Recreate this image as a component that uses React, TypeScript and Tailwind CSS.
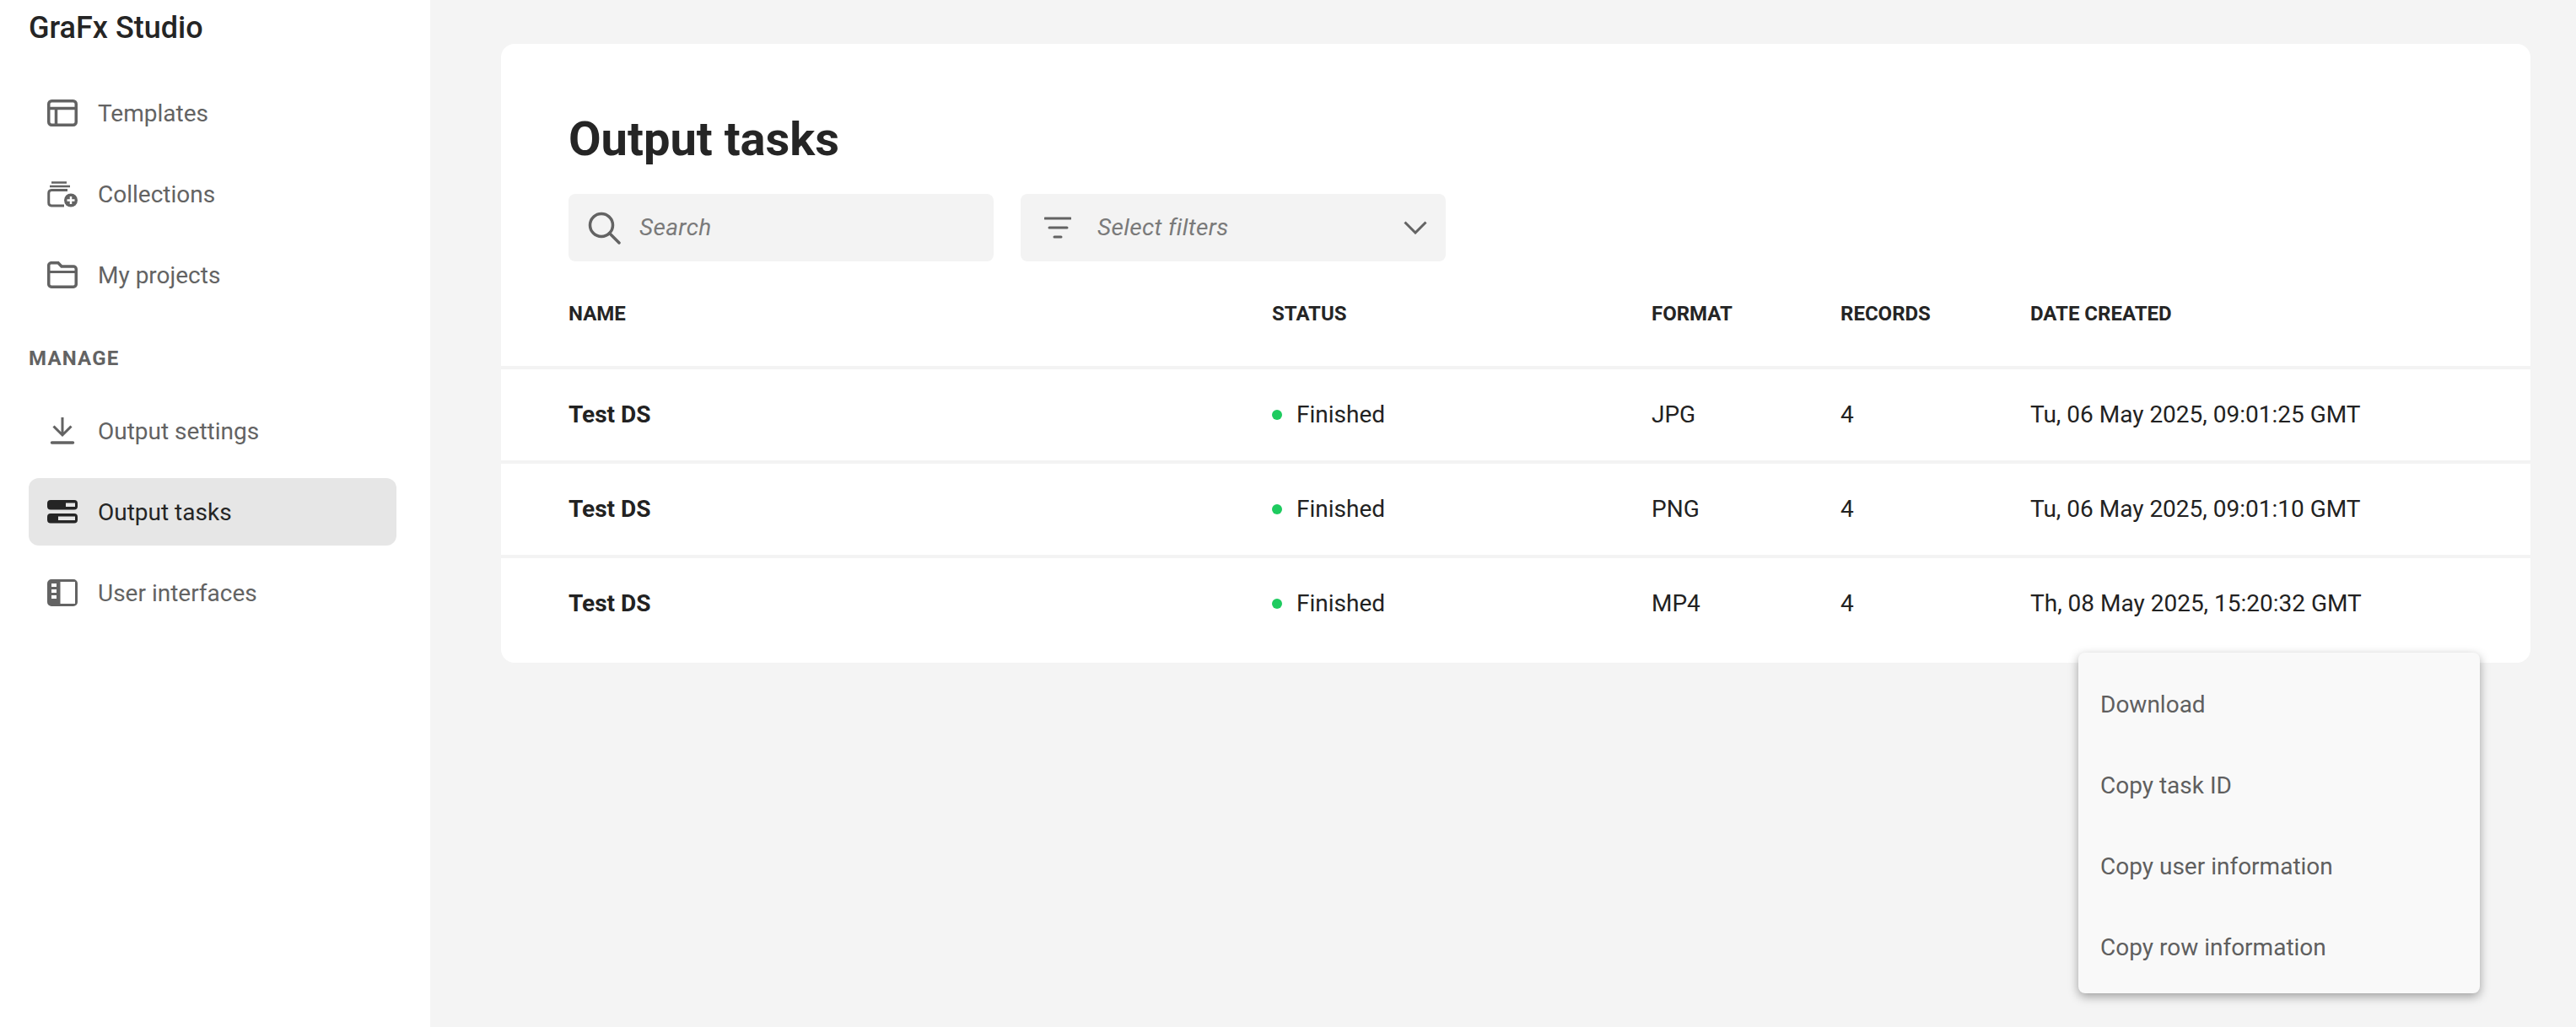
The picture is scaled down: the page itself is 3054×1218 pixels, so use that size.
import React from "react";

const TemplatesIcon = () => (
  <svg width="36" height="32" viewBox="0 0 36 32" fill="none" stroke="currentColor" strokeWidth="3.5">
    <rect x="1.75" y="1.75" width="32.5" height="28.5" rx="3.5" />
    <path d="M2 10.5H34M10.5 10.5V30" />
  </svg>
);

const CollectionsIcon = () => (
  <svg width="36" height="32" viewBox="0 0 36 32" fill="none">
    <path d="M5 2.5H23M3 7H27" stroke="currentColor" strokeWidth="2.5" />
    <path d="M24 11.5H5A3.5 3.5 0 0 0 1.75 15V26.5A3.5 3.5 0 0 0 5 30H20" stroke="currentColor" strokeWidth="3" />
    <circle cx="28" cy="23.5" r="8" fill="currentColor" />
    <path d="M28 19V28M23.5 23.5H32.5" stroke="#fff" strokeWidth="2.5" />
  </svg>
);

const FolderIcon = () => (
  <svg width="36" height="32" viewBox="0 0 36 32" fill="none" stroke="currentColor" strokeWidth="3.5">
    <path d="M1.75 5A3 3 0 0 1 5 1.75H13L17 6H31A3.2 3.2 0 0 1 34.25 9V27A3.2 3.2 0 0 1 31 30.25H5A3.2 3.2 0 0 1 1.75 27Z" />
    <path d="M2 12.5H34" strokeWidth="3" />
  </svg>
);

const DownloadIcon = () => (
  <svg width="36" height="32" viewBox="0 0 36 32" fill="none" stroke="currentColor" strokeWidth="3">
    <path d="M18 0V21M7.5 10.5L18 21L28.5 10.5" />
    <path d="M5.5 30H30.5" strokeWidth="3.5" strokeLinecap="round" />
  </svg>
);

const TasksIcon = () => (
  <svg width="36" height="28" viewBox="0 0 36 28" fill="currentColor" fillRule="evenodd">
    <path d="M4 0H32A4 4 0 0 1 36 4V7.500A4 4 0 0 1 32 11.500H4A4 4 0 0 1 0 7.500V4A4 4 0 0 1 4 0ZM22 3.500V8H33V3.500Z" />
    <path d="M4 16H32A4 4 0 0 1 36 20V23.500A4 4 0 0 1 32 27.500H4A4 4 0 0 1 0 23.500V20A4 4 0 0 1 4 16ZM13 19.500V24H33V19.500Z" />
  </svg>
);

const InterfacesIcon = () => (
  <svg width="36" height="32" viewBox="0 0 36 32" fill="currentColor" fillRule="evenodd">
    <path d="M5 0H31A5 5 0 0 1 36 5V27A5 5 0 0 1 31 32H5A5 5 0 0 1 0 27V5A5 5 0 0 1 5 0ZM15.500 3V29H33V3ZM5 5V9H11V5ZM5 12V16H11V12ZM5 19V23H11V19Z" />
  </svg>
);

const SearchIcon = () => (
  <svg width="40" height="40" viewBox="0 0 40 40" fill="none" stroke="currentColor" strokeWidth="3.5">
    <circle cx="17" cy="17" r="13.5" />
    <path d="M26.500 26.500L38 38" strokeLinecap="round" />
  </svg>
);

const FilterIcon = () => (
  <svg width="32" height="26" viewBox="0 0 32 26" fill="none" stroke="currentColor" strokeWidth="3" strokeLinecap="round">
    <path d="M1 2H31M6 13H27M12 24H20" />
  </svg>
);

const ChevronIcon = () => (
  <svg width="28" height="16" viewBox="0 0 28 16" fill="none" stroke="currentColor" strokeWidth="3">
    <path d="M1.500 1.500L14 14L26.500 1.500" />
  </svg>
);

type NavProps = { icon: React.ReactNode; label: string; active?: boolean };

const NavItem = ({ icon, label, active }: NavProps) => (
  <div
    className={`flex h-20 items-center rounded-xl pl-[22px] ${
      active ? "bg-[#e6e6e6] text-[#252525]" : "text-[#636363]"
    }`}
  >
    <span className="flex h-9 w-9 items-center justify-center">{icon}</span>
    <span className="ml-6 pt-[2px] text-[28px] leading-10">{label}</span>
  </div>
);

const rows = [
  { format: "JPG", date: "Tu, 06 May 2025, 09:01:25 GMT" },
  { format: "PNG", date: "Tu, 06 May 2025, 09:01:10 GMT" },
  { format: "MP4", date: "Th, 08 May 2025, 15:20:32 GMT" },
];

const grid = "grid grid-cols-[834px_450px_224px_225px_1fr] items-center px-20";

export default function App() {
  return (
    <div className="relative flex min-h-screen bg-[#f4f4f4] font-['Roboto',sans-serif] text-[#222222]">
      <aside className="w-[510px] shrink-0 bg-white pl-[34px] pr-[40px] pt-[12px]">
        <h1 className="text-[36px] font-medium leading-[42px] text-[#252525]">GraFx Studio</h1>
        <nav className="mt-10 flex flex-col gap-4">
          <NavItem icon={<TemplatesIcon />} label="Templates" />
          <NavItem icon={<CollectionsIcon />} label="Collections" />
          <NavItem icon={<FolderIcon />} label="My projects" />
        </nav>
        <div className="mb-7 mt-[41px] text-2xl font-bold leading-9 tracking-[1.2px] text-[#636363]">MANAGE</div>
        <nav className="flex flex-col gap-4">
          <NavItem icon={<DownloadIcon />} label="Output settings" />
          <NavItem icon={<TasksIcon />} label="Output tasks" active />
          <NavItem icon={<InterfacesIcon />} label="User interfaces" />
        </nav>
      </aside>

      <main className="flex-1 pl-[84px] pr-[54px] pt-[52px]">
        <section className="rounded-2xl bg-white pb-4">
          <div className="px-20 pt-[78px]">
            <h2 className="text-[56px] font-bold leading-[70px] text-[#252525]">Output tasks</h2>
            <div className="mt-[30px] flex gap-8">
              <div className="flex h-20 w-[504px] items-center rounded-lg bg-[#f3f3f3] pl-[22px] text-[#636363]">
                <SearchIcon />
                <span className="ml-[22px] text-[28px] italic tracking-[0.35px] text-[#7a7a7a]">Search</span>
              </div>
              <div className="flex h-20 w-[504px] items-center rounded-lg bg-[#f3f3f3] pl-7 pr-[22px] text-[#636363]">
                <FilterIcon />
                <span className="ml-[31px] flex-1 text-[28px] italic tracking-[0.35px] text-[#7a7a7a]">Select filters</span>
                <ChevronIcon />
              </div>
            </div>
          </div>
          <div className={`${grid} h-[128px] border-b-4 border-[#f3f3f3] text-2xl font-bold uppercase text-[#252525]`}>
            <span>Name</span>
            <span>Status</span>
            <span>Format</span>
            <span>Records</span>
            <span>Date created</span>
          </div>
          {rows.map((row, i) => (
            <div
              key={row.format}
              className={`${grid} text-[28px] ${i < 2 ? "h-[112px] border-b-4 border-[#f3f3f3]" : "h-[108px]"}`}
            >
              <span className="font-bold">Test DS</span>
              <span className="flex items-center gap-[17px]">
                <span className="h-3 w-3 rounded-full bg-[#1ecb5f]" />
                Finished
              </span>
              <span>{row.format}</span>
              <span>4</span>
              <span>{row.date}</span>
            </div>
          ))}
        </section>
      </main>

      <div className="absolute left-[2464px] top-[774px] w-[476px] rounded-lg bg-[#f9f9f9] pb-[6px] pt-[14px] text-[28px] text-[#5f5f5f] shadow-[0_4px_12px_rgba(0,0,0,0.35)]">
        {["Download", "Copy task ID", "Copy user information", "Copy row information"].map((label) => (
          <div key={label} className="flex h-24 items-center pl-[26px]">
            {label}
          </div>
        ))}
      </div>
    </div>
  );
}
